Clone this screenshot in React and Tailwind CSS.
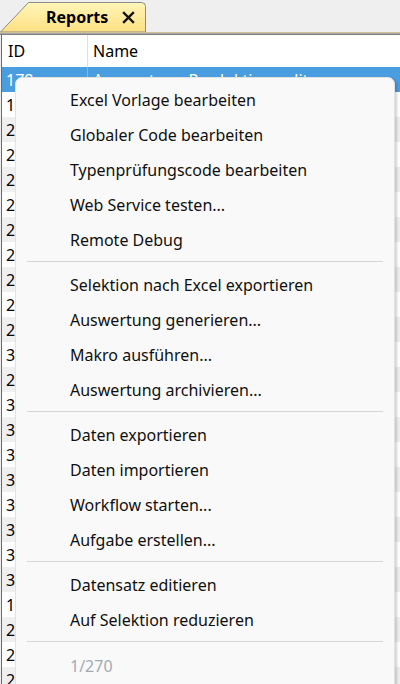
import React from 'react';

const rows = ['1', '2', '2', '2', '2', '2', '2', '2', '2', '2', '3', '2', '3', '3', '3', '3', '3', '3', '3', '3', '1', '2', '2', '2'];

const groups = [
  ['Excel Vorlage bearbeiten', 'Globaler Code bearbeiten', 'Typenprüfungscode bearbeiten', 'Web Service testen...', 'Remote Debug'],
  ['Selektion nach Excel exportieren', 'Auswertung generieren...', 'Makro ausführen...', 'Auswertung archivieren...'],
  ['Daten exportieren', 'Daten importieren', 'Workflow starten...', 'Aufgabe erstellen...'],
  ['Datensatz editieren', 'Auf Selektion reduzieren'],
];

function Tab() {
  return (
    <div className="relative w-[146px] h-[30px] shrink-0">
      <svg className="absolute inset-0" width="146" height="30" viewBox="0 0 146 30">
        <defs>
          <linearGradient id="tabfill" x1="0" y1="0" x2="0" y2="1">
            <stop offset="0" stopColor="#fff6b8" />
            <stop offset="1" stopColor="#fde084" />
          </linearGradient>
        </defs>
        <path d="M0.5 30 L28.5 0.5 L141.5 0.5 Q145.5 0.5 145.5 4.5 L145.5 30 Z" fill="url(#tabfill)" stroke="#8a8a8a" strokeWidth="1" />
      </svg>
      <div className="relative flex items-center h-full pl-[46px] gap-[14px]">
        <span className="text-[16px] font-bold text-black leading-none">Reports</span>
        <svg width="13" height="13" viewBox="0 0 13 13">
          <path d="M2 2 L11 11 M11 2 L2 11" stroke="#111" strokeWidth="2.4" strokeLinecap="square" />
        </svg>
      </div>
    </div>
  );
}

export default function App() {
  return (
    <div className="relative w-[400px] h-[684px] overflow-hidden bg-[#efefef]" style={{ fontFamily: '"Noto Sans", "Open Sans", sans-serif' }}>
      {/* Tab strip */}
      <div className="h-[32px] flex items-end">
        <Tab />
      </div>
      <div className="h-[3px] bg-gradient-to-b from-[#e0cf8c] via-[#a6a6a6] to-[#707070]" />

      {/* Table */}
      <div className="ml-px border-l border-[#6a6a6a] bg-white">
        <div className="flex h-[32px] items-center text-[16px] text-black">
          <div className="w-[86px] pl-[6px] h-full flex items-center border-r border-[#e0e0e0]">ID</div>
          <div className="pl-[5px]">Name</div>
        </div>
        <div className="flex h-[25px] items-center text-[16px] text-white bg-[#4a9ddf]">
          <div className="w-[86px] pl-[4px] h-full flex items-center border-r border-[#7fb8e6]">178</div>
          <div className="pl-[5px] whitespace-nowrap">Auswertung Produktionseditor</div>
        </div>
        {rows.map((r, i) => (
          <div key={i} className={`flex h-[25px] items-center text-[16px] text-black ${i % 2 === 0 ? 'bg-white' : 'bg-[#efefef]'}`}>
            <div className="w-[86px] pl-[4px] h-full flex items-center border-r border-[#e0e0e0]">{r}</div>
            <div className="pl-[5px]"></div>
          </div>
        ))}
      </div>

      {/* Context menu */}
      <div className="absolute left-[15px] top-[77px] w-[380px] h-[640px] rounded-[7px] bg-[#f9f9f9] border border-[#e2e2e2] shadow-[2px_2px_3px_rgba(0,0,0,0.18)] pt-[4px] text-[16px] text-[#101010]">
        {groups.map((g, gi) => (
          <div key={gi}>
            {g.map((item) => (
              <div key={item} className="h-[35px] flex items-center pl-[54px] whitespace-nowrap">{item}</div>
            ))}
            <div className="h-[10px] pt-[4px] px-[11px]">
              <div className="h-px w-full bg-[#d6d6d6]" />
            </div>
          </div>
        ))}
        <div className="h-[38px] flex items-center pl-[54px] text-[#a3aab2]">1/270</div>
      </div>
    </div>
  );
}
